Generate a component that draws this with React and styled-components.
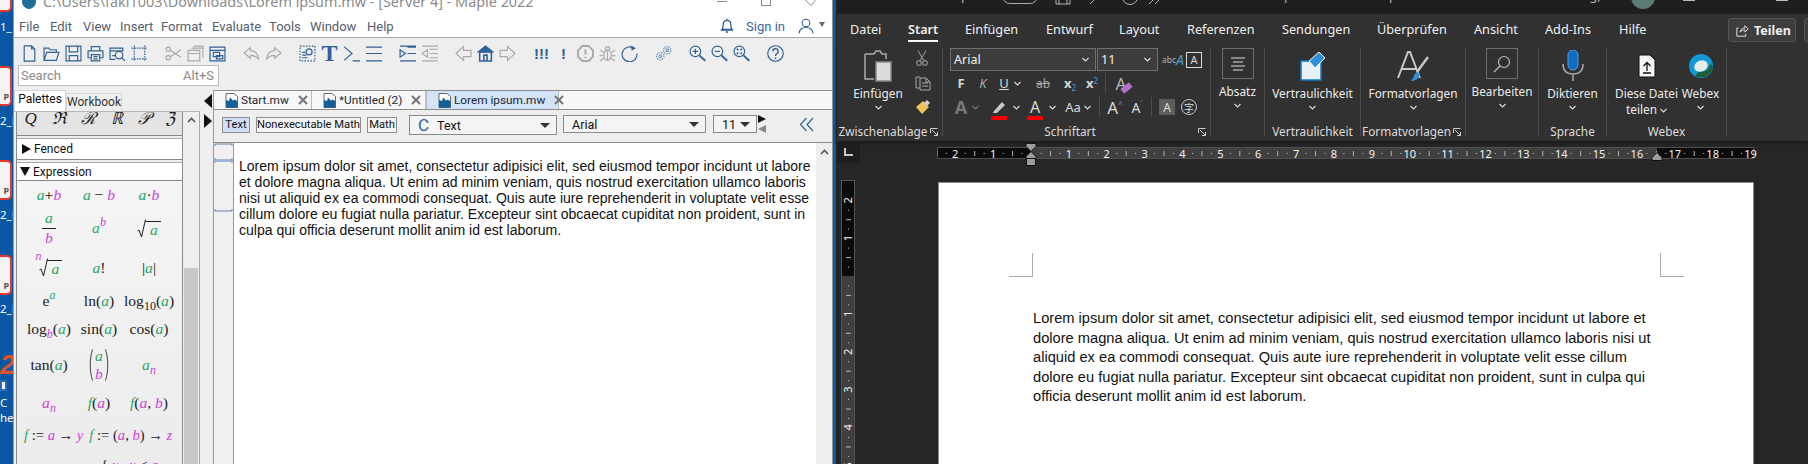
import styled, { createGlobalStyle } from "styled-components";

const GlobalStyle = createGlobalStyle`
  html, body { margin: 0; padding: 0; background: #262626; }
  #root { width: 1808px; height: 464px; overflow: hidden; }
  * { box-sizing: border-box; }
`;

const UI = `"Noto Sans", "Open Sans", sans-serif`;
const MAPLE = `Roboto, "Noto Sans", sans-serif`;

const Screen = styled.div`
  display: flex;
  width: 1808px;
  height: 464px;
  overflow: hidden;
  font-family: ${UI};
`;

/* desktop strip on the far left */
const Desktop = styled.div`
  position: relative;
  width: 13px;
  flex: none;
  background: #0b57a4;
  overflow: hidden;
`;
const DesktopIcon = styled.div`
  position: absolute;
  left: -14px;
  top: ${(p) => p.$top}px;
  width: 26px;
  height: 40px;
  background: #f4f4f4;
  border: 2px solid #e8372c;
  border-radius: 5px;
  color: #555;
  font: bold 9px ${UI};
  text-align: right;
  padding: 22px 1px 0 0;
`;
const DesktopLabel = styled.div`
  position: absolute;
  left: 0;
  top: ${(p) => p.$top}px;
  color: #fff;
  font: 11.5px ${UI};
  line-height: 13px;
  white-space: nowrap;
`;
const DesktopLogo = styled.div`
  position: absolute;
  left: 0;
  top: 352px;
  color: #d8542b;
  font: italic bold 27px "Liberation Sans", sans-serif;
  line-height: 27px;
`;
const DesktopBadge = styled.div`
  position: absolute;
  left: 0;
  top: 380px;
  width: 7px;
  height: 11px;
  background: #f2f2f2;
  border: 2px solid #2b6cb0;
`;

/* Maple window */
const Maple = styled.div`
  display: flex;
  flex-direction: column;
  width: 819px;
  flex: none;
  background: #eeeeee;
  border-left: 1px solid #9a9a9a;
  font-family: ${MAPLE};
`;
const MapleTitle = styled.div`
  display: flex;
  align-items: flex-start;
  height: 17px;
  background: #fff;
  overflow: hidden;
  padding-left: 8px;
`;
const MapleLogo = styled.svg`
  width: 14px;
  height: 14px;
  margin-top: -5px;
  flex: none;
`;
const MapleTitleText = styled.div`
  margin: -7px 0 0 7px;
  font: 14.4px/18px ${UI};
  color: #8c8c8c;
  white-space: nowrap;
`;
const WinControls = styled.div`
  display: flex;
  gap: 34px;
  margin-left: auto;
  margin-right: 16px;
`;
const WinMin = styled.div`
  width: 10px;
  height: 1px;
  background: #8a8a8a;
  margin-top: 1px;
`;
const WinMax = styled.div`
  width: 10px;
  height: 6px;
  border: 1px solid #8a8a8a;
  border-top: none;
`;
const WinClose = styled.svg`
  width: 11px;
  height: 7px;
`;
const MenuBar = styled.div`
  display: flex;
  align-items: center;
  height: 21px;
  padding: 0 7px 2px 5px;
  background: #fff;
  border-bottom: 1px solid #a8a8a8;
  font-size: 13px;
  color: #56606e;
`;
const MenuItem = styled.span`
  width: ${(p) => p.$w}px;
  flex: none;
`;
const SignIn = styled.span`
  color: #35689f;
  margin: 0 13px 0 11px;
`;
const BellSlot = styled.div`
  margin-left: ${(p) => (p.$auto ? "auto" : "0")};
  display: flex;
  color: #2f5f92;
`;
const UserArrow = styled.span`
  width: 0;
  height: 0;
  margin-left: 5px;
  margin-top: -3px;
  border-left: 3px solid transparent;
  border-right: 3px solid transparent;
  border-top: 5px solid #666;
`;
const Toolbar = styled.div`
  height: 52px;
  flex: none;
`;
const ToolRow = styled.div`
  display: flex;
  gap: 17px;
  height: 27px;
  padding: 7px 0 0 7px;
`;
const ToolGroup = styled.div`
  display: flex;
  gap: 5px;
`;
const toneColor = { off: "#a9a9a9", soft: "#7397bd" };
const ToolSlot = styled.div`
  width: 17px;
  height: 17px;
  display: flex;
  align-items: center;
  justify-content: center;
  color: ${(p) => toneColor[p.$tone] || "#2f6299"};
  font: ${(p) => p.$font || "inherit"};
  line-height: 17px;
`;
const SearchBox = styled.div`
  display: flex;
  align-items: center;
  justify-content: space-between;
  width: 201px;
  height: 21px;
  margin-left: 4px;
  padding: 0 4px 0 2px;
  background: #fff;
  border: 1px solid #bcbcbc;
  font-size: 13px;
  color: #8a8a8a;
`;
const Workspace = styled.div`
  display: flex;
  flex: 1;
  min-height: 0;
`;

/* palette side */
const PalettePane = styled.div`
  display: flex;
  flex-direction: column;
  width: 186px;
  flex: none;
`;
const PaletteTabs = styled.div`
  display: flex;
  align-items: flex-end;
  height: 22px;
  border-bottom: 1px solid #b5b5b5;
`;
const PaletteTab = styled.div`
  height: ${(p) => (p.$on ? 21 : 18)}px;
  width: ${(p) => p.$w}px;
  background: ${(p) => (p.$on ? "#fff" : "#f0f0f0")};
  border: 1px solid #d6d6d6;
  border-bottom: none;
  color: ${(p) => (p.$on ? "#111" : "#333")};
  font-size: 12px;
  line-height: 17px;
  text-align: center;
`;
const PaletteBody = styled.div`
  display: flex;
  flex: 1;
  min-height: 0;
  border-right: 1px solid #a8a8a8;
  padding-left: 2px;
`;
const PaletteColumn = styled.div`
  display: flex;
  flex-direction: column;
  width: 167px;
  flex: none;
  border-left: 1px solid #8a8a8a;
  border-right: 1px solid #8a8a8a;
`;
const SymbolRow = styled.div`
  display: flex;
  justify-content: space-around;
  align-items: flex-start;
  height: 24px;
  overflow: hidden;
  background: #e4e4e4;
  border-bottom: 1px solid #888;
  font: italic 17px "Liberation Serif", serif;
  color: #222;
  line-height: 14px;
`;
const SectionHead = styled.div`
  display: flex;
  align-items: center;
  gap: 3px;
  height: ${(p) => p.$h}px;
  margin-top: 2px;
  padding-left: ${(p) => p.$pad}px;
  background: #fff;
  border-top: 1px solid #a8a8a8;
  border-bottom: 1px solid #888;
  font-size: 12px;
  color: #111;
`;
const TriRight = styled.span`
  width: 0;
  height: 0;
  border-top: 5px solid transparent;
  border-bottom: 5px solid transparent;
  border-left: 9px solid #111;
`;
const TriDown = styled.span`
  width: 0;
  height: 0;
  border-left: 5px solid transparent;
  border-right: 5px solid transparent;
  border-top: 9px solid #111;
`;
const MathArea = styled.div`
  flex: 1;
  min-height: 0;
  overflow: hidden;
  padding-left: 7px;
  background: linear-gradient(#f5f5f5, #ececec);
  font: 15.6px "Liberation Serif", serif;
  color: #222;
`;
const MathRow = styled.div`
  display: grid;
  grid-template-columns: 50px 50px 50px;
  align-items: center;
  justify-items: center;
  height: ${(p) => p.$h}px;
  white-space: nowrap;
`;
const MathWide = styled.div`
  display: flex;
  gap: 6px;
  align-items: center;
  height: ${(p) => p.$h}px;
  margin-left: ${(p) => p.$left || 0}px;
  white-space: nowrap;
  font-size: 14.6px;
`;
const A = styled.i`
  color: #29a86a;
`;
const B = styled.i`
  color: #cf3fdc;
`;
const Up = styled.sup`
  font-size: 12px;
  line-height: 0;
  vertical-align: 7px;
`;
const RootIndex = styled.sup`
  font-size: 12px;
  line-height: 12px;
  align-self: flex-start;
  margin: -8px -3px 0 0;
`;
const Down = styled.sub`
  font-size: 12px;
  line-height: 0;
  vertical-align: -4px;
`;
const Frac = styled.span`
  display: inline-flex;
  flex-direction: column;
  align-items: center;
  line-height: 18px;
`;
const FracTop = styled.span`
  border-bottom: 1px solid #222;
  padding: 0 3px 1px;
`;
const Radical = styled.span`
  display: inline-flex;
  align-items: flex-end;
`;
const RadBar = styled.span`
  border-top: 1px solid #222;
  padding: 0 3px 0 5px;
  line-height: 16px;
  margin-left: -1px;
`;
const RootSign = styled.svg`
  width: 9px;
  height: 19px;
`;
const ParenWrap = styled.span`
  display: inline-flex;
  align-items: center;
  gap: 2px;
`;
const ParenStack = styled.span`
  display: inline-flex;
  flex-direction: column;
  align-items: center;
  line-height: 18px;
`;
const PaletteScroll = styled.div`
  display: flex;
  flex-direction: column;
  flex: 1;
  color: #555;
`;
const ScrollUp = styled.div`
  display: flex;
  justify-content: center;
  padding-top: 5px;
  height: 156px;
  flex: none;
`;
const ScrollThumb = styled.div`
  flex: 1;
  margin: 0 1px;
  background: #c8c8c8;
`;

/* collapse arrows between panes */
const CollapseStrip = styled.div`
  display: flex;
  flex-direction: column;
  align-items: flex-end;
  width: 13px;
  padding: 4px 1px 0 0;
  gap: 6px;
  flex: none;
`;
const ArrowLeft = styled.span`
  border-top: 7px solid transparent;
  border-bottom: 7px solid transparent;
  border-right: 8px solid #111;
`;
const ArrowRight = styled.span`
  border-top: 7px solid transparent;
  border-bottom: 7px solid transparent;
  border-left: 8px solid #111;
`;

/* document side */
const DocPane = styled.div`
  display: flex;
  flex-direction: column;
  flex: 1;
  min-width: 0;
  border-left: 1px solid #999;
`;
const DocTabs = styled.div`
  display: flex;
  height: 20px;
  flex: none;
  background: #f7f7f7;
  border-top: 1px solid #8c8c8c;
  border-bottom: 1px solid #8c8c8c;
`;
const DocTab = styled.div`
  display: flex;
  align-items: center;
  gap: 3px;
  width: ${(p) => p.$w}px;
  padding-left: 11px;
  background: ${(p) => (p.$on ? "#d3e3fa" : "#f7f7f7")};
  border-right: 1px solid #bdbdbd;
  border-left: ${(p) => (p.$on ? "1px solid #bdbdbd" : "none")};
  font-size: 11.8px;
  color: #1c2733;
  white-space: nowrap;
`;
const TabIcon = styled.svg`
  width: 13px;
  height: 15px;
  flex: none;
`;
const TabClose = styled.svg`
  width: 10px;
  height: 10px;
  margin-left: 6px;
  flex: none;
`;
const FormatBar = styled.div`
  display: flex;
  align-items: flex-start;
  height: 33px;
  flex: none;
  padding: 7px 0 0 8px;
  background: #eee;
  border-bottom: 1px solid #8c8c8c;
`;
const ModeButton = styled.div`
  width: ${(p) => p.$w}px;
  height: 16px;
  margin-right: 6px;
  background: ${(p) => (p.$on ? "#cfe0f6" : "#f4f4f4")};
  border: 1px solid #8f8f8f;
  font-size: 11.2px;
  line-height: 14px;
  text-align: center;
  color: #111;
  white-space: nowrap;
  flex: none;
`;
const Combo = styled.div`
  display: flex;
  align-items: center;
  justify-content: space-between;
  width: ${(p) => p.$w}px;
  height: ${(p) => p.$h}px;
  margin: -2px 0 0 ${(p) => p.$left}px;
  padding: 0 6px 0 8px;
  background: #f4f4f4;
  border: 1px solid #8a8a8a;
  font-size: 12.5px;
  color: #111;
  flex: none;
`;
const ComboValue = styled.span`
  display: flex;
  align-items: center;
  gap: 8px;
`;
const BigC = styled.span`
  color: #2f6299;
  font-size: 17px;
  line-height: 16px;
`;
const ComboArrow = styled.span`
  border-left: 5px solid transparent;
  border-right: 5px solid transparent;
  border-top: 5px solid #333;
`;
const Spinner = styled.div`
  display: flex;
  flex-direction: column;
  gap: 2px;
  margin: -2px 0 0 1px;
`;
const SpinUp = styled.span`
  border-top: 4px solid transparent;
  border-bottom: 4px solid transparent;
  border-left: 8px solid #111;
`;
const SpinDown = styled.span`
  border-top: 4px solid transparent;
  border-bottom: 4px solid transparent;
  border-right: 8px solid #888;
`;
const Chevrons = styled.svg`
  width: 15px;
  height: 15px;
  margin-left: 33px;
  flex: none;
`;
const DocArea = styled.div`
  display: flex;
  flex: 1;
  min-height: 0;
`;
const Gutter = styled.div`
  width: 20px;
  flex: none;
  background: #f0f0f0;
  border-right: 1px solid #9a9a9a;
`;
const GutterMark = styled.svg`
  display: block;
  width: 19px;
  height: 80px;
`;
const DocSheet = styled.div`
  flex: 1;
  background: #fff;
  padding: 15px 0 0 5px;
  font: 14.05px/16px "Liberation Sans", Arial, sans-serif;
  color: #111;
`;
const Line = styled.div`
  white-space: nowrap;
`;
const DocScroll = styled.div`
  display: flex;
  justify-content: center;
  width: 16px;
  flex: none;
  padding-top: 6px;
  background: #eee;
  color: #555;
`;

/* seam between both windows */
const Seam = styled.div`
  width: 5px;
  flex: none;
  background: #0c5a9e;
  border-left: 1px solid #8a97a3;
  border-right: 1px solid #222;
`;

/* Word window */
const Word = styled.div`
  display: flex;
  flex-direction: column;
  flex: 1;
  min-width: 0;
  background: #262626;
`;
const WordTitle = styled.div`
  display: flex;
  align-items: flex-start;
  height: 14px;
  flex: none;
  overflow: hidden;
  background: #1f1f1f;
  color: #b5b5b5;
  font-size: 13px;
  line-height: 16px;
`;
const WordTitleText = styled.span`
  width: ${(p) => p.$w}px;
  margin: -13px 0 0 ${(p) => p.$left}px;
  white-space: nowrap;
  flex: none;
`;
const Toggle = styled.span`
  width: 36px;
  height: 16px;
  margin: -12px 0 0 7px;
  border: 1px solid #aaa;
  border-radius: 8px;
  flex: none;
`;
const TitleGlyph = styled.svg`
  width: 16px;
  height: 16px;
  margin: -11px 0 0 ${(p) => p.$left}px;
  flex: none;
`;
const Avatar = styled.span`
  width: 24px;
  height: 24px;
  margin: -15px 0 0 11px;
  border-radius: 50%;
  background: #5b7c75;
  flex: none;
`;
const WordMinMax = styled.span`
  width: 12px;
  height: 1px;
  margin-left: ${(p) => p.$left}px;
  background: #bbb;
  flex: none;
`;
const RibbonTabs = styled.div`
  display: flex;
  align-items: center;
  height: 28px;
  flex: none;
  padding: 4px 0 0 0;
  background: #313131;
  font-size: 12.7px;
  color: #f0f0f0;
`;
const RibbonTab = styled.span`
  margin-left: ${(p) => p.$left}px;
  width: ${(p) => p.$w}px;
  flex: none;
  white-space: nowrap;
  font-weight: ${(p) => (p.$on ? 600 : 400)};
  border-bottom: ${(p) => (p.$on ? "2px solid #fff" : "2px solid transparent")};
  line-height: 20px;
  padding-bottom: 1px;
`;
const ShareButton = styled.div`
  display: flex;
  align-items: center;
  gap: 5px;
  width: 68px;
  height: 24px;
  margin-left: 83px;
  padding-left: 7px;
  background: #3e3e3e;
  border: 1px solid #565656;
  border-radius: 3px;
  font-weight: 700;
  font-size: 12.5px;
  flex: none;
`;
const ShareStub = styled.div`
  width: 12px;
  height: 24px;
  margin-left: 8px;
  background: #3e3e3e;
  border: 1px solid #565656;
  border-radius: 3px;
  flex: none;
`;
const Ribbon = styled.div`
  display: flex;
  height: 99px;
  flex: none;
  padding: 6px 0 5px 0;
  background: #313131;
  box-shadow: 0 2px 3px #1a1a1a;
  color: #ececec;
  font-size: 11.8px;
`;
const Group = styled.div`
  display: flex;
  flex-direction: column;
  width: ${(p) => p.$w}px;
  flex: none;
  border-right: 1px solid #4c4c4c;
`;
const GroupBody = styled.div`
  display: flex;
  flex: 1;
  min-height: 0;
  justify-content: ${(p) => p.$justify || "center"};
`;
const GroupFoot = styled.div`
  position: relative;
  height: 17px;
  padding-right: ${(p) => (p.$launch ? 13 : 0)}px;
  line-height: 25px;
  text-align: center;
  color: #dcdcdc;
  font-size: 11.8px;
  white-space: nowrap;
  flex: none;
`;
const Launcher = styled.svg`
  position: absolute;
  right: 4px;
  top: 9px;
  width: 8px;
  height: 8px;
`;
const BigButton = styled.div`
  display: flex;
  flex-direction: column;
  align-items: center;
  width: ${(p) => p.$w}px;
  line-height: 16px;
  text-align: center;
  white-space: nowrap;
  flex: none;
`;
const BigIcon = styled.div`
  display: flex;
  align-items: center;
  justify-content: center;
  height: 36px;
  margin-bottom: 1px;
  flex: none;
`;
const OutlineBox = styled.div`
  display: flex;
  align-items: center;
  justify-content: center;
  width: 32px;
  height: 31px;
  margin-bottom: 4px;
  border: 1px solid #6f6f6f;
  flex: none;
`;
const Caret = styled.svg`
  width: 7px;
  height: 5px;
  margin: ${(p) => p.$m || "4px 0 0"};
  flex: none;
`;
const ClipStack = styled.div`
  display: flex;
  flex-direction: column;
  gap: 8px;
  padding: 2px 0 0 6px;
  width: 30px;
  flex: none;
`;
const ClipColumn = styled.div`
  display: flex;
  padding-left: 10px;
  width: 100%;
`;
const FontColumn = styled.div`
  display: flex;
  flex-direction: column;
  padding-left: 7px;
`;
const FontInputs = styled.div`
  display: flex;
  align-items: center;
  height: 23px;
`;
const FontInput = styled.div`
  display: flex;
  align-items: center;
  justify-content: space-between;
  width: ${(p) => p.$w}px;
  height: 23px;
  margin-right: 1px;
  padding: 0 6px 0 3px;
  background: #3c3c3c;
  border: 1px solid #6f6f6f;
  font-size: 12.5px;
  color: #f0f0f0;
  flex: none;
`;
const FontRow = styled.div`
  display: flex;
  align-items: center;
  height: 25px;
`;
const Fx = styled.span`
  display: flex;
  align-items: center;
  justify-content: center;
  position: relative;
  width: ${(p) => p.$w}px;
  height: 20px;
  margin-left: ${(p) => p.$left || 0}px;
  font: ${(p) => (p.$bold ? "700" : "400")} ${(p) => p.$size || 13}px ${UI};
  font-style: ${(p) => (p.$italic ? "italic" : "normal")};
  text-decoration: ${(p) => p.$line || "none"};
  color: ${(p) => p.$color || "#d8d8d8"};
  flex: none;
`;
const RedBar = styled.span`
  position: absolute;
  left: 0;
  right: 0;
  bottom: -3px;
  height: 4px;
  background: #f00000;
`;
const Eraser = styled.span`
  position: absolute;
  right: 0;
  bottom: 2px;
  width: 11px;
  height: 6px;
  background: #b072c8;
  transform: rotate(-40deg);
`;
const Small = styled.span`
  font-size: 8px;
  font-weight: 400;
  color: #4a9bd8;
  margin-top: ${(p) => p.$t}px;
`;
const Vsep = styled.span`
  width: 1px;
  height: 20px;
  margin: 0 ${(p) => p.$r || 6}px 0 ${(p) => p.$l || 6}px;
  background: #4c4c4c;
  flex: none;
`;
const ShadeBox = styled.span`
  display: flex;
  align-items: center;
  justify-content: center;
  width: 16px;
  height: 16px;
  background: #5d5d5d;
  color: #ddd;
  font-size: 12px;
  flex: none;
`;
const CircleChar = styled.span`
  display: flex;
  align-items: center;
  justify-content: center;
  width: 16px;
  height: 16px;
  margin-left: 6px;
  border: 1px solid #c8c8c8;
  border-radius: 50%;
  color: #d8d8d8;
  font: 10px "Noto Sans CJK SC", sans-serif;
  flex: none;
`;
const AaBox = styled.span`
  display: flex;
  align-items: center;
  justify-content: center;
  width: 16px;
  height: 16px;
  margin-left: 6px;
  border: 1px solid #d8d8d8;
  color: #d8d8d8;
  font-size: 11px;
  flex: none;
`;
const TealText = styled.i`
  color: #4a9bd8;
  font-size: 14px;
  font-style: italic;
`;
const AbcWrap = styled.span`
  display: flex;
  align-items: flex-start;
  width: 18px;
  margin-left: 3px;
  color: #b5b5b5;
  font-size: 8.5px;
  line-height: 9px;
  flex: none;
`;

/* Word page area */
const RulerRow = styled.div`
  display: flex;
  align-items: flex-start;
  height: 39px;
  flex: none;
`;
const CornerBox = styled.div`
  display: flex;
  align-items: center;
  justify-content: center;
  width: 23px;
  height: 22px;
  background: #1e1e1e;
  color: #c8c8c8;
  flex: none;
`;
const TopRuler = styled.svg`
  margin: 2px 0 0 77px;
  width: 820px;
  height: 24px;
  flex: none;
`;
const PageRow = styled.div`
  display: flex;
  flex: 1;
  min-height: 0;
  padding-left: 4px;
`;
const SideRuler = styled.svg`
  width: 14px;
  height: 284px;
  flex: none;
`;
const Page = styled.div`
  width: 816px;
  margin: 2px 0 0 83px;
  padding: 70px 69px 0 70px;
  background: #fff;
  border-top: 1px solid #8a8a8a;
  border-left: 1px solid #8a8a8a;
  border-right: 1px solid #8a8a8a;
  flex: none;
`;
const CropRow = styled.div`
  display: flex;
  justify-content: space-between;
`;
const Crop = styled.div`
  width: 24px;
  height: 24px;
  border-bottom: 1px solid #aaa;
  border-left: ${(p) => (p.$right ? "1px solid #aaa" : "none")};
  border-right: ${(p) => (p.$right ? "none" : "1px solid #aaa")};
`;
const WordText = styled.div`
  margin: 32px 0 0 24px;
  font: 14.67px/19.6px "Liberation Sans", Arial, sans-serif;
  color: #111;
`;

const menus = [
  ["File", 31], ["Edit", 33], ["View", 37], ["Insert", 41], ["Format", 51],
  ["Evaluate", 57], ["Tools", 41], ["Window", 57], ["Help", 40],
];

const ln = { fill: "none", stroke: "currentColor", strokeWidth: 1.1 };

function Ico({ children, size = 17, vb = 16 }) {
  return (
    <svg width={size} height={size} viewBox={`0 0 ${vb} ${vb}`} {...ln}>
      {children}
    </svg>
  );
}

const toolIcons = {
  doc: <path d="M3 .8h7l3 3v11.4H3zM10 .8v3h3" />,
  open: <path d="M1 14.500V3h4.500l1.200 1.500h5.800V7M1 14.500 3.500 7H15l-2.500 7.500z" />,
  save: <path d="M1 1h14v14H1zM4 1v5.500h8V1M4 15v-5h8v5" />,
  print: <path d="M4 5V1.500h8V5M4 12H1V5.500h14V12h-3M4 9h8v6H4zM6 11h4M6 13h4" />,
  preview: <><path d="M6 13.500H1V3h12v3M1 5.500h12M3 10h3" /><circle cx="9.500" cy="9.500" r="3.500" /><path d="m12 12 3 3" /></>,
  select: <path d="M3 .5v15M13 .5v15M.5 3h15M.5 13h15" strokeDasharray="1.500 1" />,
  cut: <><circle cx="3" cy="4" r="2" /><circle cx="3" cy="12" r="2" /><path d="M5 5l10 6.500M5 11l10-6.500" /></>,
  copy: <path d="M1 5h11v10H1zM1 8h11M4 3h11v9M6 1h9v2" />,
  paste: <path d="M1 2h14v13H1zM1 5h14M4 7h6v4H4zM7 10h6v3H7z" />,
  undo: <path d="M7 2.500 1 7.500l6 5V9.700c3 0 5.500 1 7.500 3.300C14 8.500 11 5.500 7 5.300z" />,
  redo: <path d="M9 2.500l6 5-6 5V9.700c-3 0-5.500 1-7.500 3.300C2 8.500 5 5.500 9 5.300z" />,
  lens: <><path d="M1 1h14v14H1z" strokeDasharray="1.500 1.300" /><circle cx="9.500" cy="6.500" r="2.800" /><path d="M3 7h3M3 9.500h4M3 12h5" /></>,
  prompt: <path d="M1 1.500 8.500 8 1 14.500M9 15h7" />,
  three: <path d="M1 2h15M1 8h15M1 15h15" />,
  indent: <path d="M1 4.500 6 8l-5 3.500zM8 2h8M8 8h8M1 15h15M1 1h15" />,
  outdent: <path d="M6 4.500 1 8l5 3.500zM8 4h8M8 8h8M8 12h8M1 1h15M1 15h15" />,
  back: <path d="M1 8l7-6.500V5h7v6H8v3.500z" />,
  home: <><path d="M1 6.500 8 1l7 5.500z" fill="currentColor" /><path d="M2.500 6.500H13.500V15H2.500zM6.500 15V9.500h3V15" strokeWidth="1.500" /></>,
  fwd: <path d="M15 8 8 1.500V5H1v6h7v3.500z" />,
  stop: <><path d="M5 1h6l4 4v6l-4 4H5l-4-4V5z" strokeWidth="1.800" /><path d="M8 4v5M8 11v1.500" strokeWidth="1.800" /></>,
  bug: <><ellipse cx="8" cy="9.500" rx="3.500" ry="5" /><circle cx="8" cy="3.500" r="2" /><path d="M1 5l3.500 2M15 5l-3.500 2M0.500 10h4M15.500 10h-4M1 15l3.500-2.500M15 15l-3.500-2.500M8 6v8" /></>,
  refresh: <><path d="M12 3a7 7 0 1 0 3 5" /><path d="M9.500 .5 14 3l-4 2.500" fill="currentColor" stroke="none" /></>,
  gears: <><circle cx="5" cy="10.500" r="3.500" strokeDasharray="1.600 .8" /><circle cx="5" cy="10.500" r="1.300" /><circle cx="11.500" cy="5" r="3.500" strokeDasharray="1.600 .8" /><circle cx="11.500" cy="5" r="1.300" /></>,
  zin: <><circle cx="6" cy="6" r="5" /><path d="m9.800 9.800 5.500 5" strokeWidth="1.800" /><path d="M3.500 6h5M6 3.500v5" /></>,
  zout: <><circle cx="6" cy="6" r="5" /><path d="m9.800 9.800 5.500 5" strokeWidth="1.800" /><path d="M3.500 6h5" /></>,
  zfit: <><circle cx="6" cy="6" r="5" /><path d="m9.800 9.800 5.500 5" strokeWidth="1.800" /><path d="M3.500 3.500l1.500 1.500M8.500 3.500 7 5M3.500 8.500 5 7M8.500 8.500 7 7" strokeWidth="1.400" /></>,
  help: <><circle cx="8" cy="8" r="7.300" /><path d="M5.500 6a2.500 2.500 0 1 1 3.600 2.300C8.300 8.700 8 9.300 8 10.300M8 11.700v1.500" strokeWidth="1.300" /></>,
};

const toolGroups = [
  [["doc"], ["open"], ["save"], ["print"], ["preview"], ["select"]],
  [["cut", "off"], ["copy", "off"], ["paste"]],
  [["undo", "off"], ["redo", "off"]],
  [["lens"], ["T"], ["prompt"], ["three"]],
  [["indent"], ["outdent", "off"]],
  [["back", "off"], ["home"], ["fwd", "off"]],
  [["!!!"], ["!"], ["stop", "off"], ["bug", "off"], ["refresh"]],
  [["gears", "soft"]],
  [["zin"], ["zout"], ["zfit"]],
  [["help"]],
];

function Tool({ name, tone }) {
  if (name === "T") return <ToolSlot $font={`bold 24px "Liberation Serif", serif`}>T</ToolSlot>;
  if (name === "!!!") return <ToolSlot $font={`bold 15px "Liberation Sans", sans-serif`}>!!!</ToolSlot>;
  if (name === "!") return <ToolSlot $font={`bold 15px "Liberation Sans", sans-serif`}>!</ToolSlot>;
  return <ToolSlot $tone={tone}><Ico>{toolIcons[name]}</Ico></ToolSlot>;
}

const TabDoc = () => (
  <TabIcon viewBox="0 0 13 15">
    <path d="M1 .5h8l3.500 3v11H1z" fill="#fff" stroke="#666" />
    <path d="M1 14.500V7l3 1 1-3.500 3 3 2-1 2.500 2v6z" fill="#135f96" />
  </TabIcon>
);

const TabX = () => (
  <TabClose viewBox="0 0 10 10">
    <path d="M1 1l8 8M9 1 1 9" stroke="#777" strokeWidth="2" fill="none" />
  </TabClose>
);

const CaretIcon = ({ m, dim }) => (
  <Caret viewBox="0 0 7 5" $m={m}>
    <path d="M.5 1 3.500 4l3-3" fill="none" stroke={dim ? "#777" : "#ddd"} strokeWidth="1.100" />
  </Caret>
);

const LaunchIcon = () => (
  <Launcher viewBox="0 0 8 8">
    <path d="M.5 5V.5H7.500M2 2l5.500 5.500M7.500 4v3.500H4" fill="none" stroke="#ccc" />
  </Launcher>
);

function Horizontal() {
  const origin = 94;
  const unit = 37.87;
  const marks = [];
  for (let n = -3; n <= 19; n++) {
    const x = origin + n * unit;
    if (n !== 0 && n > -3) {
      marks.push(
        <text key={"n" + n} x={x} y="14.500" textAnchor="middle" fontSize="11" fontFamily={UI} fill="#f2f2f2">
          {Math.abs(n)}
        </text>
      );
    }
    if (n < 19) {
      marks.push(<rect key={"h" + n} x={x + unit / 2} y="8" width="1" height="5" fill="#b5b5b5" />);
    }
    [0.25, 0.75].forEach((f) => {
      if (n === 19 && f > 0.5) return;
      if (x + f * unit > 2) marks.push(<rect key={"q" + n + f} x={x + f * unit} y="10" width="1" height="1" fill="#c8c8c8" />);
    });
  }
  return (
    <TopRuler viewBox="0 0 820 24">
      <rect x=".5" y="4.500" width="816" height="11" fill="#0b0b0b" stroke="#4f4f4f" />
      <rect x="94" y="5" width="626" height="10" fill="#3f3f3f" />
      {marks}
      <path d="M89 .5h10v3l-5 5-5-5z" fill="#9c9c9c" stroke="#111" />
      <path d="M94 8.500l5 5v2H89v-2z" fill="#9c9c9c" stroke="#111" />
      <rect x="89.500" y="15.500" width="9" height="7" fill="#9c9c9c" stroke="#111" />
      <path d="M720 9.500l5 5v3h-10v-3z" fill="#9c9c9c" stroke="#111" />
    </TopRuler>
  );
}

function Vertical() {
  const origin = 96;
  const unit = 37.87;
  const marks = [];
  for (let n = -2; n <= 5; n++) {
    const y = origin + n * unit;
    if (n !== 0) {
      marks.push(
        <text key={"n" + n} x="0" y="0" transform={`translate(11 ${y}) rotate(-90)`} textAnchor="middle" fontSize="11" fontFamily={UI} fill="#f2f2f2">
          {Math.abs(n)}
        </text>
      );
    }
    marks.push(<rect key={"h" + n} x="5" y={y + unit / 2} width="5" height="1" fill="#b5b5b5" />);
    marks.push(<rect key={"a" + n} x="7" y={y + unit / 4} width="1" height="1" fill="#c8c8c8" />);
    marks.push(<rect key={"b" + n} x="7" y={y + (unit * 3) / 4} width="1" height="1" fill="#c8c8c8" />);
  }
  return (
    <SideRuler viewBox="0 0 14 284">
      <rect x=".5" y=".5" width="13" height="290" fill="#3f3f3f" stroke="#555" />
      <rect x="1" y="1" width="12" height="95" fill="#0b0b0b" />
      {marks}
    </SideRuler>
  );
}

const Root = () => (
  <RootSign viewBox="0 0 9 19">
    <path d="M.5 12 2 11l2.500 7L8.500 .5" fill="none" stroke="#222" />
  </RootSign>
);

const leftLines = [
  "Lorem ipsum dolor sit amet, consectetur adipisici elit, sed eiusmod tempor incidunt ut labore",
  "et dolore magna aliqua. Ut enim ad minim veniam, quis nostrud exercitation ullamco laboris",
  "nisi ut aliquid ex ea commodi consequat. Quis aute iure reprehenderit in voluptate velit esse",
  "cillum dolore eu fugiat nulla pariatur. Excepteur sint obcaecat cupiditat non proident, sunt in",
  "culpa qui officia deserunt mollit anim id est laborum.",
];
const rightLines = [
  "Lorem ipsum dolor sit amet, consectetur adipisici elit, sed eiusmod tempor incidunt ut labore et",
  "dolore magna aliqua. Ut enim ad minim veniam, quis nostrud exercitation ullamco laboris nisi ut",
  "aliquid ex ea commodi consequat. Quis aute iure reprehenderit in voluptate velit esse cillum",
  "dolore eu fugiat nulla pariatur. Excepteur sint obcaecat cupiditat non proident, sunt in culpa qui",
  "officia deserunt mollit anim id est laborum.",
];

const wordTabs = [
  ["Datei", 13, 45], ["Start", 13, 30, true], ["Einfügen", 27, 50], ["Entwurf", 31, 43],
  ["Layout", 30, 38], ["Referenzen", 30, 65], ["Sendungen", 30, 65], ["Überprüfen", 30, 67],
  ["Ansicht", 30, 41], ["Add-Ins", 30, 45], ["Hilfe", 29, 26],
];

export default function App() {
  return (
    <Screen>
      <GlobalStyle />
      <Desktop>
        <DesktopIcon $top={-28} />
        <DesktopLabel $top={20}>1_</DesktopLabel>
        <DesktopIcon $top={66}>P</DesktopIcon>
        <DesktopLabel $top={114}>2_E</DesktopLabel>
        <DesktopIcon $top={160}>P</DesktopIcon>
        <DesktopLabel $top={208}>2_E</DesktopLabel>
        <DesktopIcon $top={255}>P</DesktopIcon>
        <DesktopLabel $top={302}>2_E</DesktopLabel>
        <DesktopLogo>2</DesktopLogo>
        <DesktopBadge />
        <DesktopLabel $top={396}>C</DesktopLabel>
        <DesktopLabel $top={411}>he</DesktopLabel>
      </Desktop>

      <Maple>
        <MapleTitle>
          <MapleLogo viewBox="0 0 14 14">
            <path d="M7 0c4 0 7 3 7 6.500S11 14 7 14 0 10 0 6.500 3 0 7 0z" fill="#1f6f96" />
          </MapleLogo>
          <MapleTitleText>C:\Users\fakl1003\Downloads\Lorem ipsum.mw - [Server 4] - Maple 2022</MapleTitleText>
          <WinControls>
            <WinMin />
            <WinMax />
            <WinClose viewBox="0 0 11 7">
              <path d="M.5 0 6 5.500 10.500 0" fill="none" stroke="#8a8a8a" />
            </WinClose>
          </WinControls>
        </MapleTitle>
        <MenuBar>
          {menus.map(([label, w]) => (
            <MenuItem key={label} $w={w}>{label}</MenuItem>
          ))}
          <BellSlot $auto>
            <Ico size={16}>
              <path d="M3 11.500c1-1 1.200-2.500 1.200-5C4.200 4 5.800 2.300 8 2.300S11.800 4 11.800 6.500c0 2.500.2 4 1.200 5zM1.800 12h12.400M6.800 14h2.400M8 .8v1.500" strokeWidth="1.300" />
            </Ico>
          </BellSlot>
          <SignIn>Sign in</SignIn>
          <BellSlot>
            <Ico size={16}>
              <circle cx="8" cy="5" r="3.800" />
              <path d="M1 15.500c.5-4 3-6 7-6s6.500 2 7 6" />
            </Ico>
          </BellSlot>
          <UserArrow />
        </MenuBar>
        <Toolbar>
          <ToolRow>
            {toolGroups.map((group, i) => (
              <ToolGroup key={i}>
                {group.map(([name, tone]) => (
                  <Tool key={name} name={name} tone={tone} />
                ))}
              </ToolGroup>
            ))}
          </ToolRow>
          <SearchBox>
            <span>Search</span>
            <span>Alt+S</span>
          </SearchBox>
        </Toolbar>

        <Workspace>
          <PalettePane>
            <PaletteTabs>
              <PaletteTab $on $w={52}>Palettes</PaletteTab>
              <PaletteTab $w={56}>Workbook</PaletteTab>
            </PaletteTabs>
            <PaletteBody>
              <PaletteColumn>
                <SymbolRow>
                  <span>Q</span><span>ℜ</span><span>ℛ</span><span>ℝ</span><span>𝒫</span><span>ℨ</span>
                </SymbolRow>
                <SectionHead $h={22} $pad={5}><TriRight />Fenced</SectionHead>
                <SectionHead $h={19} $pad={3}><TriDown />Expression</SectionHead>
                <MathArea>
                  <MathRow $h={27}>
                    <span><A>a</A>+<B>b</B></span>
                    <span><A>a</A> − <B>b</B></span>
                    <span><A>a</A>·<B>b</B></span>
                  </MathRow>
                  <MathRow $h={40}>
                    <Frac><FracTop><A>a</A></FracTop><B>b</B></Frac>
                    <span><A>a</A><Up><B>b</B></Up></span>
                    <Radical><Root /><RadBar><A>a</A></RadBar></Radical>
                  </MathRow>
                  <MathRow $h={39}>
                    <Radical><RootIndex><B>n</B></RootIndex><Root /><RadBar><A>a</A></RadBar></Radical>
                    <span><A>a</A>!</span>
                    <span>|<A>a</A>|</span>
                  </MathRow>
                  <MathRow $h={27}>
                    <span>e<Up><A>a</A></Up></span>
                    <span>ln(<A>a</A>)</span>
                    <span>log<Down>10</Down>(<A>a</A>)</span>
                  </MathRow>
                  <MathRow $h={29}>
                    <span>log<Down><B>b</B></Down>(<A>a</A>)</span>
                    <span>sin(<A>a</A>)</span>
                    <span>cos(<A>a</A>)</span>
                  </MathRow>
                  <MathRow $h={44}>
                    <span>tan(<A>a</A>)</span>
                    <ParenWrap>
                      <svg width="4" height="32" viewBox="0 0 4 32"><path d="M3.500 .5C.5 10 .5 22 3.500 31.500" fill="none" stroke="#444" /></svg>
                      <ParenStack><A>a</A><B>b</B></ParenStack>
                      <svg width="4" height="32" viewBox="0 0 4 32"><path d="M.5 .5C3.500 10 3.500 22 .5 31.500" fill="none" stroke="#444" /></svg>
                    </ParenWrap>
                    <span><A>a</A><Down><B>n</B></Down></span>
                  </MathRow>
                  <MathRow $h={32}>
                    <span><B>a</B><Down><B>n</B></Down></span>
                    <span><A>f</A>(<B>a</B>)</span>
                    <span><A>f</A>(<B>a</B>, <B>b</B>)</span>
                  </MathRow>
                  <MathWide $h={32} $left={0}>
                    <span><A>f</A> := <B>a</B> → <B>y</B></span>
                    <span><A>f</A> := (<B>a</B>, <B>b</B>) → <B>z</B></span>
                  </MathWide>
                  <MathWide $h={28} $left={77}>
                    <span>{"{"} <B>x</B>, &nbsp;<B>x</B> ≤ <B>a</B></span>
                  </MathWide>
                </MathArea>
              </PaletteColumn>
              <PaletteScroll>
                <ScrollUp>
                  <svg width="9" height="6" viewBox="0 0 9 6">
                    <path d="M1 5 4.500 1.500 8 5" fill="none" stroke="currentColor" strokeWidth="1.600" />
                  </svg>
                </ScrollUp>
                <ScrollThumb />
              </PaletteScroll>
            </PaletteBody>
          </PalettePane>

          <CollapseStrip>
            <ArrowLeft />
            <ArrowRight />
          </CollapseStrip>

          <DocPane>
            <DocTabs>
              <DocTab $w={98}><TabDoc />Start.mw<TabX /></DocTab>
              <DocTab $w={114}><TabDoc />*Untitled (2)<TabX /></DocTab>
              <DocTab $w={133} $on><TabDoc />Lorem ipsum.mw<TabX /></DocTab>
            </DocTabs>
            <FormatBar>
              <ModeButton $on $w={28}>Text</ModeButton>
              <ModeButton $w={105}>Nonexecutable Math</ModeButton>
              <ModeButton $w={30}>Math</ModeButton>
              <Combo $w={148} $h={20} $left={6}>
                <ComboValue><BigC>C</BigC>Text</ComboValue>
                <ComboArrow />
              </Combo>
              <Combo $w={143} $h={18} $left={6}>
                <span>Arial</span>
                <ComboArrow />
              </Combo>
              <Combo $w={44} $h={18} $left={7}>
                <span>11</span>
                <ComboArrow />
              </Combo>
              <Spinner>
                <SpinUp />
                <SpinDown />
              </Spinner>
              <Chevrons viewBox="0 0 15 15">
                <path d="M7.500 1 1.500 7.500l6 6.500M14 1 8 7.500l6 6.500" fill="none" stroke="#2f6299" strokeWidth="1.200" />
              </Chevrons>
            </FormatBar>
            <DocArea>
              <Gutter>
                <GutterMark viewBox="0 0 19 80">
                  <path d="M1 3V1h17v2M1 15v2h17v-2M1 20v-2h17v2M1 66v2h17v-2" fill="none" stroke="#5d82ab" />
                  <rect x="0" y="17" width="19" height="2" fill="#9db5d1" />
                </GutterMark>
              </Gutter>
              <DocSheet>
                {leftLines.map((t) => (
                  <Line key={t}>{t}</Line>
                ))}
              </DocSheet>
              <DocScroll>
                <svg width="9" height="6" viewBox="0 0 9 6">
                  <path d="M1 5 4.500 1.500 8 5" fill="none" stroke="currentColor" strokeWidth="1.600" />
                </svg>
              </DocScroll>
            </DocArea>
          </DocPane>
        </Workspace>
      </Maple>

      <Seam />

      <Word>
        <WordTitle>
          <WordTitleText $left={23} $w={135}>Automatisches Speichern</WordTitleText>
          <Toggle />
          <TitleGlyph $left={17} viewBox="0 0 16 16">
            <path d="M1 1h14v14H1zM4 15v-5h8v5" fill="none" stroke="#b5b5b5" />
          </TitleGlyph>
          <TitleGlyph $left={17} viewBox="0 0 16 16">
            <path d="M2 15 12 5" fill="none" stroke="#b5b5b5" />
          </TitleGlyph>
          <TitleGlyph $left={18} viewBox="0 0 16 16">
            <circle cx="8" cy="8" r="7.500" fill="none" stroke="#b5b5b5" />
          </TitleGlyph>
          <TitleGlyph $left={9} viewBox="0 0 16 16">
            <path d="M2 15 12 5M8 15 15 8" fill="none" stroke="#b5b5b5" />
          </TitleGlyph>
          <WordTitleText $left={75} $w={128}>Lorem ipsum.mw</WordTitleText>
          <WordTitleText $left={0} $w={163}>Gespeichert</WordTitleText>
          <WordTitleText $left={0} $w={91}>Falkenberg, Klaus</WordTitleText>
          <Avatar />
          <WordMinMax $left={28} />
          <WordMinMax $left={81} />
        </WordTitle>
        <RibbonTabs>
          {wordTabs.map(([label, left, w, on]) => (
            <RibbonTab key={label} $left={left} $w={w} $on={on}>{label}</RibbonTab>
          ))}
          <ShareButton>
            <Ico size={13}>
              <path d="M3 5H1v10h11v-3M5 10c.5-3.500 3-5 6-5V2l4 4-4 4V7.500c-2.500 0-4.500.5-6 2.500z" />
            </Ico>
            Teilen
          </ShareButton>
          <ShareStub />
        </RibbonTabs>

        <Ribbon>
          <Group $w={106}>
            <GroupBody>
              <ClipColumn>
                <BigButton $w={62}>
                  <BigIcon>
                    <svg width="30" height="32" viewBox="0 0 30 32" fill="none" stroke="#aaa" strokeWidth="1.500">
                      <path d="M7 4h4l2-3h4l2 3h4v5M2 4h5M2 4v25h9" />
                      <rect x="13" y="12" width="15" height="19" fill="#dcdcdc" stroke="#888" />
                    </svg>
                  </BigIcon>
                  Einfügen
                  <CaretIcon />
                </BigButton>
                <ClipStack>
                  <svg width="14" height="16" viewBox="0 0 14 16" fill="none" stroke="#8c8c8c" strokeWidth="1.200">
                    <circle cx="4" cy="13" r="2.300" /><circle cx="10" cy="13" r="2.300" /><path d="M5 11 11 .5M9 11 3 .5" />
                  </svg>
                  <svg width="16" height="17" viewBox="0 0 16 17" fill="none" stroke="#a8a8a8">
                    <path d="M5 3H1v11h4M5 4h6l4 4v8H5zM7 9h6M7 12h6M11 4v4h4" />
                  </svg>
                  <svg width="16" height="16" viewBox="0 0 16 16">
                    <path d="M1 8 8 2l6 6-7 7z" fill="#f1c25c" />
                    <path d="M9 4l3-3 3 3-3 3z" fill="#cfcfcf" />
                  </svg>
                </ClipStack>
              </ClipColumn>
            </GroupBody>
            <GroupFoot $launch>Zwischenablage<LaunchIcon /></GroupFoot>
          </Group>

          <Group $w={268}>
            <GroupBody $justify="flex-start">
              <FontColumn>
                <FontInputs>
                  <FontInput $w={146}><span>Arial</span><CaretIcon m="0" /></FontInput>
                  <FontInput $w={61}><span>11</span><CaretIcon m="0" /></FontInput>
                  <AbcWrap>abc<TealText>A</TealText></AbcWrap>
                  <AaBox>A</AaBox>
                </FontInputs>
                <FontRow>
                  <Fx $w={22} $bold>F</Fx>
                  <Fx $w={22} $italic $color="#a8a8a8">K</Fx>
                  <Fx $w={20} $line="underline">U</Fx>
                  <CaretIcon m="0 6px 0 0" />
                  <Fx $w={32} $size={12} $line="line-through" $color="#a8a8a8">ab</Fx>
                  <Fx $w={22} $bold>x<Small $t={8}>2</Small></Fx>
                  <Fx $w={22} $bold>x<Small $t={-6}>2</Small></Fx>
                  <Vsep $l={2} $r={4} />
                  <Fx $w={22} $size={17} $color="#b5b5b5">A<Eraser /></Fx>
                </FontRow>
                <FontRow>
                  <Fx $w={22} $size={18} $bold $color="#777">A</Fx>
                  <CaretIcon m="0 12px 0 0" dim />
                  <Fx $w={16}>
                    <svg width="16" height="15" viewBox="0 0 16 15">
                      <path d="M3 11 11 2l3 3-8 8H2zM6 13h9" fill="#c8c8c8" />
                    </svg>
                    <RedBar />
                  </Fx>
                  <CaretIcon m="0 7px 0 6px" />
                  <Fx $w={16} $size={16}>A<RedBar /></Fx>
                  <CaretIcon m="0 6px 0 6px" />
                  <Fx $w={22} $size={13}>Aa</Fx>
                  <CaretIcon m="0" />
                  <Vsep $l={8} $r={4} />
                  <Fx $w={22} $size={17}>A<Small $t={-8}>^</Small></Fx>
                  <Fx $w={22} $size={14}>A<Small $t={-8}>˅</Small></Fx>
                  <Vsep $l={3} $r={7} />
                  <ShadeBox>A</ShadeBox>
                  <CircleChar>字</CircleChar>
                </FontRow>
              </FontColumn>
            </GroupBody>
            <GroupFoot $launch>Schriftart<LaunchIcon /></GroupFoot>
          </Group>

          <Group $w={54}>
            <GroupBody>
              <BigButton $w={54}>
                <OutlineBox>
                  <svg width="16" height="14" viewBox="0 0 16 14" fill="none" stroke="#ddd">
                    <path d="M1 1h14M3 5h10M1 9h14M3 13h10" />
                  </svg>
                </OutlineBox>
                Absatz
                <CaretIcon />
              </BigButton>
            </GroupBody>
            <GroupFoot />
          </Group>

          <Group $w={96}>
            <GroupBody>
              <BigButton $w={90}>
                <BigIcon>
                  <svg width="26" height="30" viewBox="0 0 26 30">
                    <rect x="1" y="10" width="20" height="19" fill="#e8f1fa" stroke="#0f78c8" strokeWidth="1.500" />
                    <path d="M9 10 19 1l6 6-10 10z" fill="#2f8fd8" stroke="#fff" />
                  </svg>
                </BigIcon>
                Vertraulichkeit
                <CaretIcon />
              </BigButton>
            </GroupBody>
            <GroupFoot>Vertraulichkeit</GroupFoot>
          </Group>

          <Group $w={105}>
            <GroupBody>
              <BigButton $w={100}>
                <BigIcon>
                  <svg width="32" height="32" viewBox="0 0 32 32">
                    <path d="M1 28 11 2h2l10 26M5 19h14" fill="none" stroke="#c8c8c8" strokeWidth="2" />
                    <path d="M31 7 20 22" stroke="#c8c8c8" strokeWidth="2.500" />
                    <path d="M14 31c3 0 8-1 9-7l-3-2c-3 1-3 6-6 9z" fill="#2f8fd8" />
                  </svg>
                </BigIcon>
                Formatvorlagen
                <CaretIcon />
              </BigButton>
            </GroupBody>
            <GroupFoot $launch>Formatvorlagen<LaunchIcon /></GroupFoot>
          </Group>

          <Group $w={73}>
            <GroupBody>
              <BigButton $w={70}>
                <OutlineBox>
                  <svg width="18" height="18" viewBox="0 0 18 18" fill="none" stroke="#bbb" strokeWidth="1.200">
                    <circle cx="11" cy="7" r="5.500" /><path d="M7 11 1 17" />
                  </svg>
                </OutlineBox>
                Bearbeiten
                <CaretIcon />
              </BigButton>
            </GroupBody>
            <GroupFoot />
          </Group>

          <Group $w={68}>
            <GroupBody>
              <BigButton $w={68}>
                <BigIcon>
                  <svg width="22" height="32" viewBox="0 0 22 32">
                    <rect x="6" y="0" width="10" height="20" rx="5" fill="#0f6cc0" stroke="#4fa0e0" />
                    <path d="M1 14c0 7 4 10 10 10s10-3 10-10M11 24v7" fill="none" stroke="#a8a8a8" strokeWidth="1.500" />
                  </svg>
                </BigIcon>
                Diktieren
                <CaretIcon />
              </BigButton>
            </GroupBody>
            <GroupFoot>Sprache</GroupFoot>
          </Group>

          <Group $w={120}>
            <GroupBody>
              <BigButton $w={68}>
                <BigIcon>
                  <svg width="18" height="24" viewBox="0 0 18 24">
                    <path d="M1 1h11l5 5v17H1z" fill="#f5f5f5" stroke="#111" />
                    <path d="M9 17V9M5.500 12 9 8.500l3.500 3.500M5 19h8" fill="none" stroke="#111" strokeWidth="1.300" />
                  </svg>
                </BigIcon>
                Diese Datei
                <span>teilen <CaretIcon m="0 0 1px" /></span>
              </BigButton>
              <BigButton $w={40}>
                <BigIcon>
                  <svg width="24" height="24" viewBox="0 0 24 24">
                    <circle cx="12" cy="12" r="12" fill="#0f9ad6" />
                    <path d="M24 12a12 12 0 0 1-18 10l4-5c5 2 10-1 11-7z" fill="#1f5e3a" />
                    <ellipse cx="12" cy="12" rx="7" ry="5.500" fill="#e4efe6" transform="rotate(-25 12 12)" />
                  </svg>
                </BigIcon>
                Webex
                <CaretIcon />
              </BigButton>
            </GroupBody>
            <GroupFoot>Webex</GroupFoot>
          </Group>
        </Ribbon>

        <RulerRow>
          <CornerBox>
            <svg width="9" height="8" viewBox="0 0 9 8">
              <path d="M1 0v7h8" fill="none" stroke="currentColor" strokeWidth="2" />
            </svg>
          </CornerBox>
          <Horizontal />
        </RulerRow>
        <PageRow>
          <Vertical />
          <Page>
            <CropRow>
              <Crop />
              <Crop $right />
            </CropRow>
            <WordText>
              {rightLines.map((t) => (
                <Line key={t}>{t}</Line>
              ))}
            </WordText>
          </Page>
        </PageRow>
      </Word>
    </Screen>
  );
}
